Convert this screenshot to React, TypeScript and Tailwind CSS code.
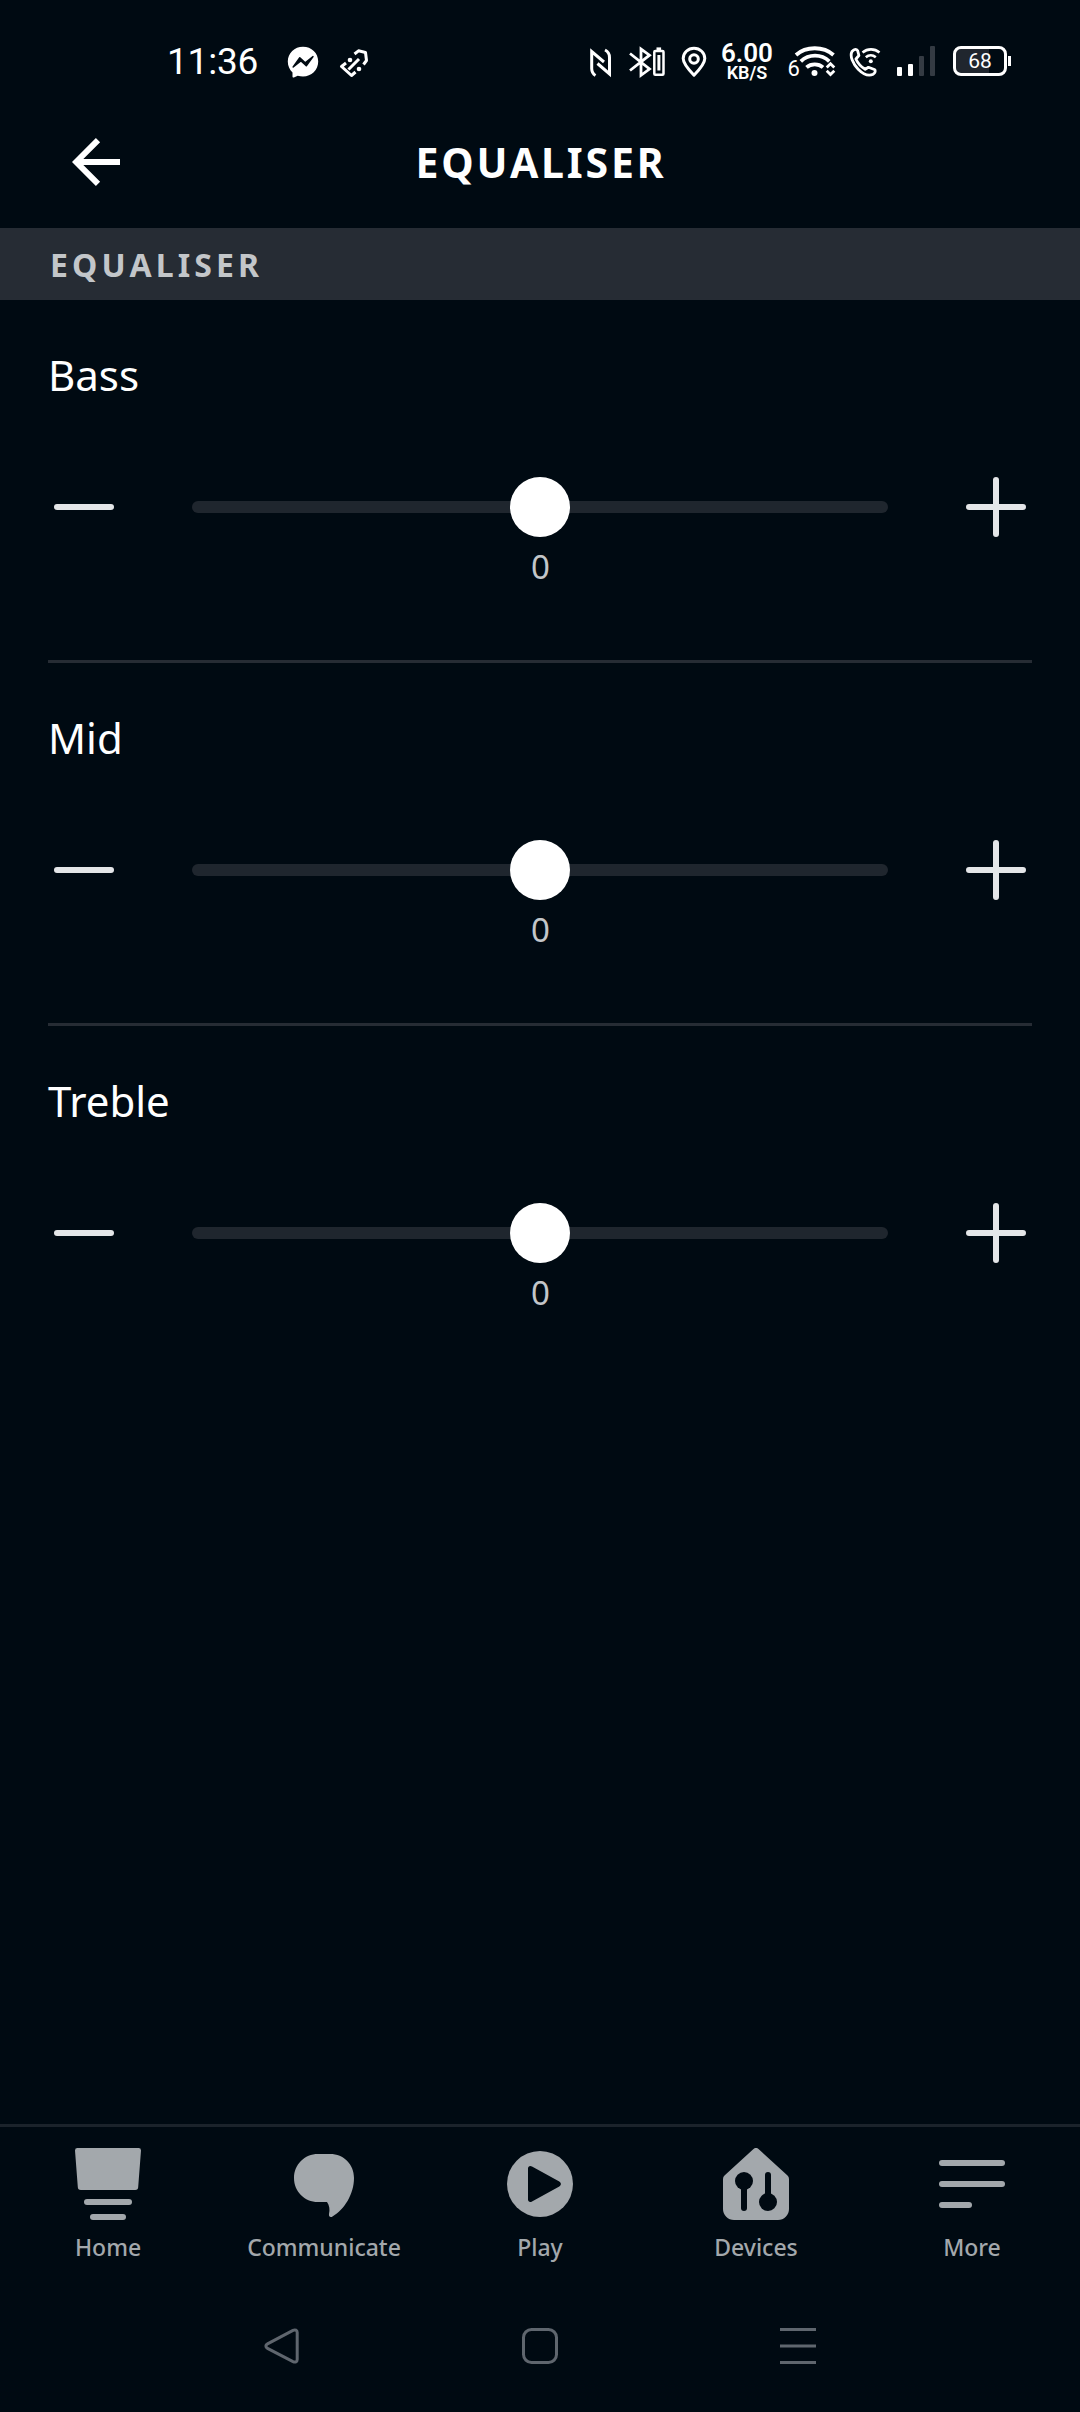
import { useState, type ReactNode } from 'react'

const MIN_LEVEL = -6
const MAX_LEVEL = 6

function StatusBar() {
  return (
    <div className="flex h-24 items-start pt-[42px] text-white">
      <span className="ml-[167px] w-[108px] pt-px whitespace-nowrap font-[Roboto,sans-serif] text-[37px] leading-[38px] tracking-[-0.2px]">
        11:36
      </span>
      <svg className="ml-[11px] h-[38px] w-[34px]" viewBox="0 0 34 38" fill="none">
        <path
          d="M17 4.7c-8.5 0-15.2 6.3-15.2 14.8 0 4.5 1.8 8.2 4.7 10.9v4.2c0 .8.7 1.2 1.4.9l3.8-1.8c1.7.5 3.5.8 5.3.8 8.5 0 15.2-6.4 15.2-15S25.5 4.7 17 4.7z"
          fill="#fff"
        />
        <path d="M7.2 25l6.6-9.2 5.4 5L27 14.6l-6.7 9.2-5.5-5z" fill="#000a12" stroke="#000a12" strokeWidth="1.5" strokeLinejoin="round" />
      </svg>
      <svg className="ml-[18px] h-[38px] w-8" viewBox="0 0 32 38" fill="none" stroke="#fff" strokeWidth="3">
        <path d="M16.500 12l4-3.200 7 1.700 1 8-3 4" strokeLinejoin="round" />
        <path d="M8 21l-4.500 3.500 10 9 4-3.500" strokeLinejoin="round" />
        <path d="M10.500 27.500l10.500-10.500" />
        <circle cx="12" cy="18" r="2.3" fill="#fff" stroke="none" />
        <circle cx="21" cy="27" r="2.3" fill="#fff" stroke="none" />
      </svg>

      <svg className="ml-[218px] h-[38px] w-[26px]" viewBox="0 0 26 38" fill="none" stroke="#fff" strokeWidth="3">
        <path d="M7.500 33.500C5 32 3.700 30 3.700 26.500V9.500l12.300 10.500" />
        <path d="M17 8c3.200 1.500 4.500 4 4.500 7.500v16.500L9.500 21.500" />
      </svg>
      <svg className="ml-[14px] h-[38px] w-[38px]" viewBox="0 0 38 38" fill="none" stroke="#fff" strokeWidth="2.8">
        <path d="M2 11.500l19.500 15.500-8.500 6.300V7l8.500 6.200L2 28.500" />
        <rect x="26.3" y="8.9" width="9.2" height="23.8" rx="1" strokeWidth="2.5" />
        <path d="M28.500 6.800h4.600" />
        <path d="M30.900 13v15.500" strokeWidth="3" />
      </svg>
      <svg className="ml-[14px] h-[38px] w-7" viewBox="0 0 28 38" fill="none" stroke="#fff" strokeWidth="3">
        <path d="M14 33.200C7.500 26.500 3.200 21.500 3.200 16.500a10.800 10.300 0 0 1 21.600 0c0 5-4.300 10-10.800 16.700z" strokeLinejoin="round" />
        <circle cx="14" cy="17" r="4.300" />
      </svg>
      <div className="ml-[12px] flex w-[54px] flex-col items-center whitespace-nowrap font-[Roboto,sans-serif] font-semibold">
        <span className="text-[26px] leading-[22px]">6.00</span>
        <span className="text-[18px] leading-[18px]">KB/S</span>
      </div>
      <svg className="ml-[14px] h-[38px] w-[50px]" viewBox="0 0 50 38" fill="none" stroke="#fff" strokeWidth="3.8">
        <text x="-0.5" y="34" fontSize="22" fill="#fff" stroke="none" fontFamily="Roboto, sans-serif">
          6
        </text>
        <path d="M8 13c10-9 27.500-9 37.500 0" />
        <path d="M12.800 19.300c8-7.500 20.500-7.500 28.500 0" />
        <path d="M18.500 25.300c4.500-4 12-4 16.500 0" />
        <circle cx="26.5" cy="31" r="3" fill="#fff" stroke="none" />
        <path d="M38.700 25.500l3.800-3.700 3.800 3.700M38.700 28.800l3.800 3.700 3.800-3.700" strokeWidth="2.8" />
      </svg>
      <svg className="ml-[10px] h-[38px] w-[34px]" viewBox="0 0 34 38" fill="none" stroke="#fff" strokeWidth="2.8">
        <path
          d="M4 9.500c2.500-2.800 4.500-2.500 5.700-.7l1.200 4.700-3 3.500c1.800 4 5 7.800 9.300 10.300l3.200-2 6 2.200c1.500 1 1 3-1.200 4.700-4 2-9.700.3-15-5C5 22 1.500 14 4 9.500z"
          strokeLinejoin="round"
        />
        <path d="M14.500 10.500c5-4.200 12-4.200 17 0" strokeWidth="2.6" />
        <path d="M17.800 15.200c3-2.500 7-2.500 10 0" strokeWidth="2.6" />
        <circle cx="22.8" cy="19.3" r="2" fill="#fff" stroke="none" />
      </svg>
      <svg className="ml-[14px] h-[38px] w-10" viewBox="0 0 40 38">
        <rect x="1" y="25" width="5" height="9" rx="1" fill="#fff" />
        <rect x="12" y="22" width="5" height="12" rx="1" fill="#fff" />
        <rect x="23" y="14" width="5" height="20" rx="1" fill="#343b43" />
        <rect x="34" y="4" width="5" height="30" rx="1" fill="#343b43" />
      </svg>
      <svg className="ml-[16px] h-[38px] w-[60px]" viewBox="0 0 60 38" fill="none">
        <path d="M8 6h29v26H8a5 5 0 0 1-5-5V11a5 5 0 0 1 5-5z" fill="#20262e" />
        <rect x="2.5" y="5.5" width="51" height="27" rx="6.5" stroke="#fff" strokeWidth="3" />
        <path d="M57.500 14v10" stroke="#fff" strokeWidth="3" />
        <text x="28" y="26.3" textAnchor="middle" fontSize="21" fill="#fff" fontFamily="Roboto, sans-serif">
          68
        </text>
      </svg>
    </div>
  )
}

function Header() {
  return (
    <header className="grid h-[132px] grid-cols-[1fr_auto_1fr] items-center">
      <button className="ml-[72px] w-12" aria-label="Back">
        <svg className="h-12 w-12" viewBox="0 0 48 48" fill="none" stroke="#fff" strokeWidth="6">
          <path d="M26 2.200L4.200 24 26 45.800M4.200 24H48" />
        </svg>
      </button>
      <h1 className="pl-[2px] text-[41px] leading-none font-bold tracking-[2.8px] text-white">EQUALISER</h1>
    </header>
  )
}

function BandControl({ name }: { name: string }) {
  const [level, setLevel] = useState(0)
  const position = ((level - MIN_LEVEL) / (MAX_LEVEL - MIN_LEVEL)) * 100

  return (
    <section className="mx-12 h-[363px] border-b-[3px] border-[#262c34] pt-[46px] last:border-transparent">
      <h3 className="text-[42px] leading-[58px] text-white">{name}</h3>
      <div className="mt-[73px] flex h-[60px] items-center justify-between px-1.5">
        <button
          className="flex h-[60px] w-[60px] items-center"
          aria-label={`Decrease ${name}`}
          onClick={() => setLevel(Math.max(MIN_LEVEL, level - 1))}
        >
          <span className="h-1.5 w-full rounded-full bg-[#e4e6e8]" />
        </button>
        <div className="relative h-3 w-[696px] rounded-full bg-[#1f262e]">
          <div
            className="absolute -top-6 h-[60px] w-[60px] -translate-x-1/2 rounded-full bg-white"
            style={{ left: `${position}%` }}
          />
        </div>
        <button
          className="h-[60px] w-[60px]"
          aria-label={`Increase ${name}`}
          onClick={() => setLevel(Math.min(MAX_LEVEL, level + 1))}
        >
          <svg viewBox="0 0 60 60" stroke="#e4e6e8" strokeWidth="6" strokeLinecap="round">
            <path d="M3 30h54M30 3v54" />
          </svg>
        </button>
      </div>
      <p className="mt-[9px] pl-px text-center text-[33px] leading-[42px] text-[#c3c6c9]">{level}</p>
    </section>
  )
}

function TabItem({ label, children }: { label: string; children: ReactNode }) {
  return (
    <button className="flex flex-col items-center pt-[21px]">
      <svg className="h-[72px] w-[72px]" viewBox="0 0 72 72" fill="#a3a8ac">
        {children}
      </svg>
      <span className="mt-[11px] text-[23px] leading-8 font-medium text-[#a3a8ac]">{label}</span>
    </button>
  )
}

function TabBar() {
  return (
    <nav className="grid h-[156px] grid-cols-5 border-t-[3px] border-[#1b232b]">
      <TabItem label="Home">
        <path d="M5.500 0h61a2.500 2.500 0 0 1 2.500 2.600L66.200 39a3 3 0 0 1-3 3H8.800a3 3 0 0 1-3-3L3 2.600A2.500 2.500 0 0 1 5.500 0z" />
        <rect x="12" y="51" width="48" height="6" rx="3" />
        <rect x="18" y="66" width="36" height="6" rx="3" />
      </TabItem>
      <TabItem label="Communicate">
        <path d="M30 6h12c14 0 24 10.500 24 24 0 16-9.500 31.500-21.500 38.500-2 1.200-4 .2-3.500-2.500C42 61.500 41.500 57.500 39 54h-9C16.500 54 6 43.500 6 30S16.500 6 30 6z" />
      </TabItem>
      <TabItem label="Play">
        <circle cx="36" cy="36" r="33" />
        <path d="M24 20.500c0-2.300 2-3.200 4-2L55.300 33.500c2.200 1.300 2.200 3.700 0 5L28 53.500c-2 1.200-4 .3-4-2z" fill="#000a12" />
      </TabItem>
      <TabItem label="Devices">
        <path d="M33.500 1a3.600 3.600 0 0 1 5 0L67.500 27.500a5 5 0 0 1 1.500 3.500v30a11 11 0 0 1-11 11H14A11 11 0 0 1 3 61V31a5 5 0 0 1 1.500-3.500z" />
        <g fill="#000a12">
          <circle cx="24" cy="33" r="9" />
          <rect x="21" y="36" width="6" height="27" rx="3" />
          <circle cx="48" cy="54" r="9" />
          <rect x="45" y="24" width="6" height="27" rx="3" />
        </g>
      </TabItem>
      <TabItem label="More">
        <rect x="3" y="12" width="66" height="6" rx="3" />
        <rect x="3" y="33" width="66" height="6" rx="3" />
        <rect x="3" y="54" width="33" height="6" rx="3" />
      </TabItem>
    </nav>
  )
}

function SystemNav() {
  return (
    <div className="flex h-[132px] items-center justify-between px-[264px]">
      <svg className="h-9 w-9" viewBox="0 0 36 36" fill="none" stroke="#5f666e" strokeWidth="3">
        <path d="M29 2.400 3.500 15.800c-2.200 1.200-2.200 3.400 0 4.600l25.500 13.200c2.200 1 4.200.2 4.200-2.200V4.600c0-2.400-2-3.300-4.200-2.200z" />
      </svg>
      <svg className="h-9 w-9" viewBox="0 0 36 36" fill="none" stroke="#5f666e" strokeWidth="3">
        <rect x="1.5" y="1.5" width="33" height="33" rx="8" />
      </svg>
      <svg className="h-9 w-9" viewBox="0 0 36 36" fill="none" stroke="#5f666e" strokeWidth="3">
        <path d="M0 1.500h36M0 18h36M0 34.500h36" />
      </svg>
    </div>
  )
}

export default function App() {
  return (
    <div className="flex h-[2412px] w-[1080px] flex-col overflow-hidden bg-[#000a12] font-['Noto_Sans',sans-serif]">
      <StatusBar />
      <Header />
      <h2 className="flex h-[72px] shrink-0 items-center bg-[#262c34] pt-px pl-[50px] text-[32px] leading-none font-bold tracking-[4.1px] text-[#c3c6c9]">
        EQUALISER
      </h2>
      <main className="flex-1">
        <BandControl name="Bass" />
        <BandControl name="Mid" />
        <BandControl name="Treble" />
      </main>
      <TabBar />
      <SystemNav />
    </div>
  )
}
